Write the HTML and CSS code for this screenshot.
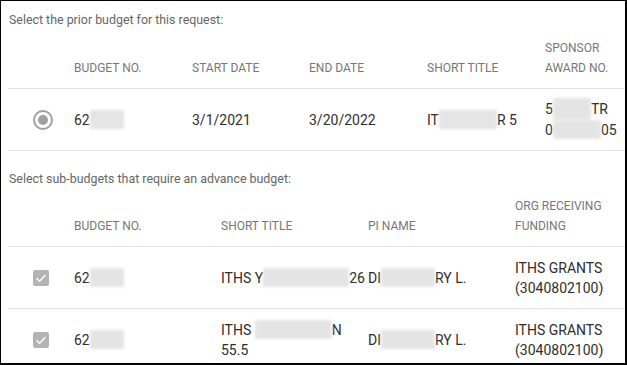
FILE: index.html
```html
<!DOCTYPE html>
<html>
<head>
<meta charset="utf-8">
<link rel="stylesheet" href="styles.css">
</head>
<body>
<div class="frame">
  <section class="block">
    <div class="prompt first">Select the prior budget for this request:</div>
    <div class="table t1">
      <div class="row head">
        <div class="cell"></div>
        <div class="cell">Budget No.</div>
        <div class="cell">Start Date</div>
        <div class="cell">End Date</div>
        <div class="cell">Short Title</div>
        <div class="cell">Sponsor<br>Award No.</div>
      </div>
      <div class="row data">
        <div class="cell sel"><span class="radio"><span class="dot"></span></span></div>
        <div class="cell">62<span class="blur w34"></span></div>
        <div class="cell">3/1/2021</div>
        <div class="cell">3/20/2022</div>
        <div class="cell">IT<span class="blur w58"></span>R 5</div>
        <div class="cell">5<span class="blur w38 tall"></span>TR<br>0<span class="blur w48"></span>05</div>
      </div>
    </div>
  </section>
  <section class="block">
    <div class="prompt second">Select sub-budgets that require an advance budget:</div>
    <div class="table t2">
      <div class="row head">
        <div class="cell"></div>
        <div class="cell">Budget No.</div>
        <div class="cell">Short Title</div>
        <div class="cell">PI Name</div>
        <div class="cell">Org Receiving<br>Funding</div>
      </div>
      <div class="row data">
        <div class="cell sel"><span class="check"><svg viewBox="0 0 16 16" width="16" height="16"><path d="M3.5 8.3 L6.6 11.2 L12.5 5" fill="none" stroke="#fff" stroke-width="1.4"/></svg></span></div>
        <div class="cell">62<span class="blur w34"></span></div>
        <div class="cell">ITHS Y<span class="blur w86"></span>26</div>
        <div class="cell">DI<span class="blur w54"></span>RY L.</div>
        <div class="cell">ITHS GRANTS<br>(3040802100)</div>
      </div>
      <div class="row data">
        <div class="cell sel"><span class="check"><svg viewBox="0 0 16 16" width="16" height="16"><path d="M3.5 8.3 L6.6 11.2 L12.5 5" fill="none" stroke="#fff" stroke-width="1.4"/></svg></span></div>
        <div class="cell">62<span class="blur w34"></span></div>
        <div class="cell">ITHS <span class="blur w77"></span>N<br>55.5</div>
        <div class="cell">DI<span class="blur w54"></span>RY L.</div>
        <div class="cell">ITHS GRANTS<br>(3040802100)</div>
      </div>
    </div>
  </section>
</div>
</body>
</html>
```
FILE: styles.css
```css
* { box-sizing: border-box; }
html, body { margin: 0; padding: 0; background: #fff; }
body { font-family: Roboto, "Liberation Sans", Arial, sans-serif; }

.frame {
  width: 627px;
  height: 365px;
  border-style: solid;
  border-color: #000;
  border-width: 1px 2px 2px 1px;
  padding-left: 7px;
  overflow: hidden;
  background: #fff;
}

.prompt {
  font-size: 12.4px;
  line-height: 20px;
  color: #666;
  padding-left: 1px;
}
.prompt.first { padding-top: 9px; }
.prompt.second { padding-top: 18px; }

.table { display: flex; flex-direction: column; }
.row {
  display: grid;
  border-bottom: 1px solid #e3e3e3;
}
.t1 .row { grid-template-columns: 66px 118px 117px 118px 118px 1fr; }
.t2 .row { grid-template-columns: 66px 147px 147px 147px 1fr; }

.head {
  align-items: end;
  font-size: 12px;
  line-height: 20px;
  color: #777;
  text-transform: uppercase;
  padding: 8px 0 10px;
}
.t2 .head { padding-top: 7px; }

.data {
  height: 62px;
  align-items: center;
  font-size: 14px;
  line-height: 20px;
  color: #2e2e2e;
  flex-shrink: 0;
}

.cell { white-space: nowrap; }
.sel { display: flex; align-items: center; padding-left: 25px; }

.radio {
  width: 20px;
  height: 20px;
  border: 2px solid #a0a0a0;
  border-radius: 50%;
  display: flex;
  align-items: center;
  justify-content: center;
}
.radio .dot {
  width: 10px;
  height: 10px;
  border-radius: 50%;
  background: #a0a0a0;
}

.check {
  width: 16px;
  height: 16px;
  background: #b3b3b3;
  border-radius: 2px;
  display: block;
}
.check svg { display: block; }

.blur {
  display: inline-block;
  height: 19px;
  vertical-align: middle;
  background: #e4e4e4;
  filter: blur(1.5px);
  margin-top: -3px;
}
.blur.tall { height: 22px; }
.w34 { width: 34px; }
.w38 { width: 38px; }
.w48 { width: 48px; }
.w54 { width: 54px; }
.w58 { width: 58px; }
.w77 { width: 77px; }
.w86 { width: 86px; }
```
